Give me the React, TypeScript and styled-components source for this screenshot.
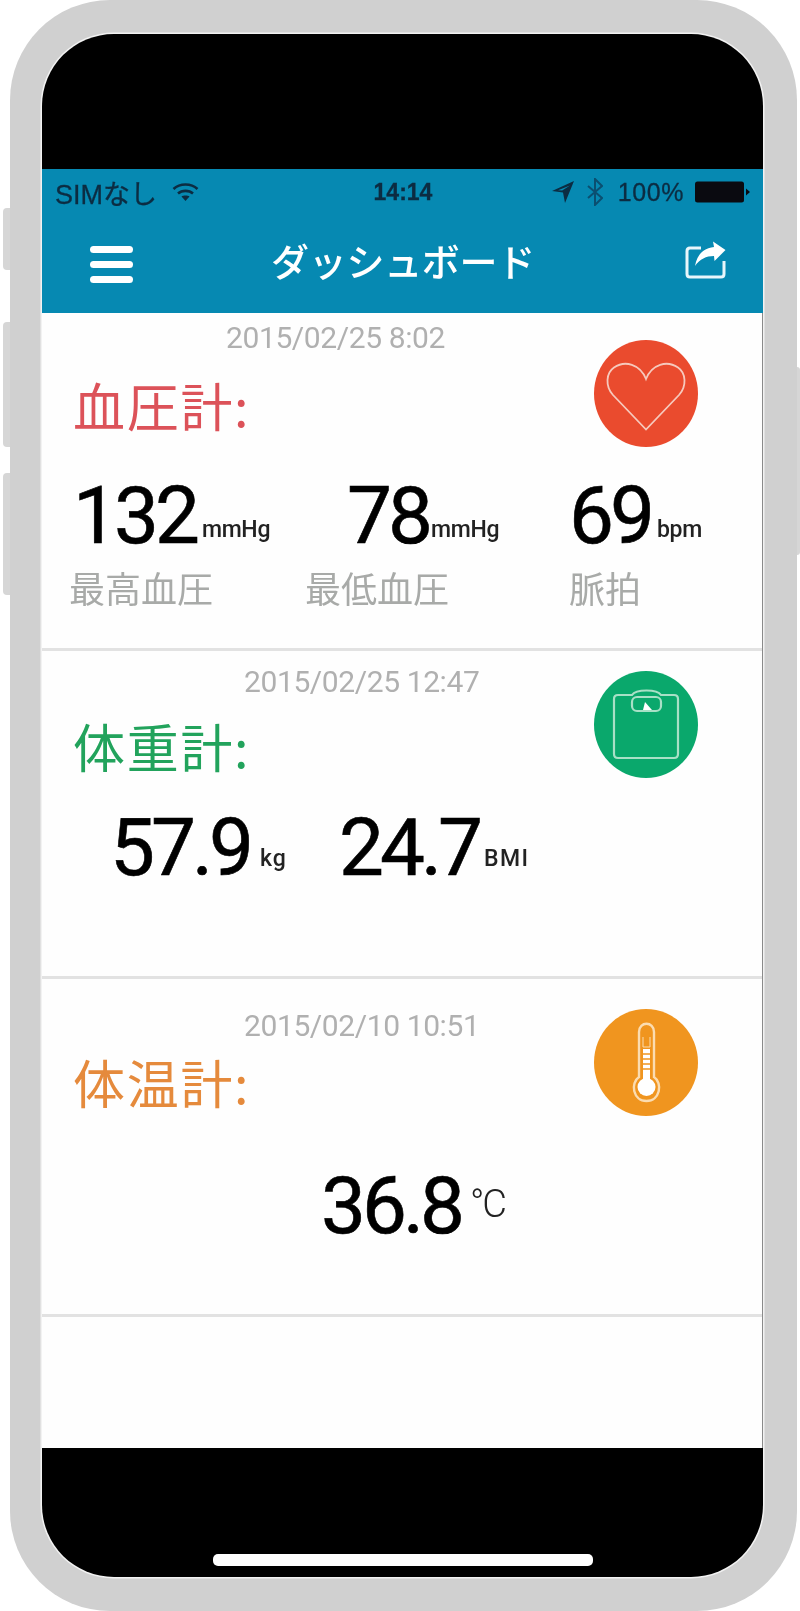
import React from "react";
import styled, { createGlobalStyle } from "styled-components";

const Global = createGlobalStyle`
  html, body { margin: 0; padding: 0; background: #fff; }
  body { width: 800px; height: 1611px; overflow: hidden; font-family: Roboto, "Noto Sans CJK JP", sans-serif; }
`;

const Stage = styled.div`
  width: 800px;
  height: 1611px;
  padding-left: 10px;
  box-sizing: border-box;
  filter: blur(0.6px);
`;
const Phone = styled.div`
  position: relative;
  width: 787px;
  height: 1611px;
  box-sizing: border-box;
  padding: 34px 34px 34px 32px;
  background: #d0d0d0;
  border-radius: 100px;
`;
const SideButton = styled.div<{ $top: number; $height: number; $right?: boolean }>`
  position: absolute;
  top: ${p => p.$top}px;
  height: ${p => p.$height}px;
  width: ${p => (p.$right ? 3 : 7)}px;
  ${p => (p.$right ? "right: -3px;" : "left: -7px;")}
  background: #d6d6d6;
  border-radius: ${p => (p.$right ? "0 3px 3px 0" : "4px 0 0 4px")};
`;
const Screen = styled.div`
  height: 100%;
  display: flex;
  flex-direction: column;
  background: #000;
  border-radius: 72px;
  overflow: hidden;
  box-shadow: 0 0 0 1.5px #f2f2f2;
`;
const TopBlack = styled.div`
  height: 135px;
  flex: none;
`;
const AppBar = styled.header`
  flex: none;
  height: 144px;
  background: #0689b2;
  display: flex;
  flex-direction: column;
`;
const StatusBar = styled.div`
  height: 46px;
  display: grid;
  grid-template-columns: 1fr auto 1fr;
  align-items: center;
  padding: 0 12px 0 13px;
  color: #0c2c42;
  font-family: "Liberation Sans", "Noto Sans CJK JP", sans-serif;
  font-size: 27px;
  -webkit-text-stroke: 0.3px #0c2c42;
`;
const StatusLeft = styled.div`
  display: flex;
  align-items: center;
  gap: 15px;
`;
const StatusTime = styled.div`
  font-weight: 700;
  font-size: 23px;
`;
const StatusRight = styled.div`
  display: flex;
  align-items: center;
  justify-content: flex-end;
  gap: 13px;
`;
const Percent = styled.span`
  font-size: 25px;
  letter-spacing: 0.6px;
  margin: 0 -2px 0 2px;
`;
const NavBar = styled.div`
  flex: 1;
  display: grid;
  grid-template-columns: 1fr auto 1fr;
  align-items: center;
  padding: 0 36px 8px 48px;
  color: #fff;
`;
const NavTitle = styled.div`
  font-family: "Noto Sans CJK JP", sans-serif;
  font-size: 38px;
  font-weight: 500;
  line-height: 44px;
  letter-spacing: -0.3px;
  margin-left: -11px;
`;
const NavRight = styled.div`
  display: flex;
  justify-content: flex-end;
`;
const MenuButton = styled.div`
  display: flex;
  flex-direction: column;
  gap: 8px;
  width: 43px;
  margin-top: 9px;
`;
const MenuBar = styled.div`
  height: 7px;
  background: #fff;
  border-radius: 4px;
`;
const Content = styled.main`
  flex: none;
  height: 1135px;
  background: #fefefe;
  border-right: 1px solid #8a8a8a;
  box-sizing: border-box;
`;
const Card = styled.section<{ $height: number }>`
  height: ${p => p.$height}px;
  box-sizing: border-box;
  padding: 0 64px 0 27px;
  border-bottom: 3px solid #e2e2e2;
`;
const CardHead = styled.div`
  display: grid;
  grid-template-columns: 1fr 104px;
  align-items: start;
`;
const DateText = styled.div<{ $top: number; $left: number }>`
  margin-top: ${p => p.$top}px;
  margin-left: ${p => p.$left}px;
  font-size: 30px;
  line-height: 30px;
  letter-spacing: -0.4px;
  color: #b0b0b0;
`;
const Title = styled.h2<{ $gap: number; $color: string }>`
  margin: ${p => p.$gap}px 0 0 4px;
  font-family: "Noto Sans CJK JP", sans-serif;
  font-size: 52px;
  line-height: 60px;
  font-weight: 400;
  letter-spacing: 1.7px;
  color: ${p => p.$color};
`;
const Badge = styled.div<{ $top: number; $color: string }>`
  margin-top: ${p => p.$top}px;
  width: 104px;
  height: 107px;
  border-radius: 50%;
  background: ${p => p.$color};
  display: flex;
  align-items: center;
  justify-content: center;
`;
const ValueRow = styled.div<{ $top: number; $left: number }>`
  display: flex;
  margin-top: ${p => p.$top}px;
  padding-left: ${p => p.$left}px;
`;
const Column = styled.div<{ $width?: number }>`
  ${p => (p.$width ? `width: ${p.$width}px;` : "")}
  flex: none;
`;
const Value = styled.div<{ $indent?: number }>`
  margin-left: ${p => p.$indent ?? 0}px;
  font-size: 80px;
  line-height: 80px;
  letter-spacing: -4px;
  -webkit-text-stroke: 0.6px #000;
  color: #000;
  white-space: nowrap;
`;
const Unit = styled.span<{ $lift?: number; $gap?: number; $thin?: boolean; $wide?: number }>`
  display: inline-block;
  margin-left: ${p => p.$gap ?? 10}px;
  font-size: ${p => (p.$thin ? 38 : 23)}px;
  font-weight: ${p => (p.$thin ? 300 : 500)};
  line-height: 0;
  letter-spacing: ${p => (p.$thin ? "-2px" : `${p.$wide ?? -0.3}px`)};
  vertical-align: ${p => p.$lift ?? 6}px;
  -webkit-text-stroke: 0;
  color: #222;
`;
const Label = styled.div`
  margin-top: 13px;
  font-family: "Noto Sans CJK JP", sans-serif;
  font-size: 36px;
  line-height: 36px;
  color: #a8aaa8;
`;
const BottomBlack = styled.div`
  flex: 1;
  display: flex;
  align-items: flex-end;
  justify-content: center;
  padding-bottom: 11px;
`;
const HomeBar = styled.div`
  width: 380px;
  height: 12px;
  border-radius: 5px;
  background: #fff;
`;

const Wifi = () => (
  <svg width="27" height="20" viewBox="0 0 27 20" fill="none" stroke="#0c2c42" strokeWidth="2.6">
    <path d="M1.5 7 C8 1 19 1 25.5 7" />
    <path d="M6 11.5 C10 8 17 8 21 11.5" />
    <path d="M13.5 19 L9.5 14.6 C11.5 13.2 15.5 13.2 17.5 14.6 Z" fill="#0c2c42" stroke="none" />
  </svg>
);
const Arrow = () => (
  <svg width="22" height="22" viewBox="0 0 22 22" fill="#0c2c42">
    <path d="M22 0 L0 10 L11 11.5 L13 22 Z M18 4.5 L10.2 9.6 L6 9.3 Z" fillRule="evenodd" />
  </svg>
);
const Bluetooth = () => (
  <svg width="16" height="28" viewBox="0 0 16 28" fill="none" stroke="#0b4f70" strokeWidth="2">
    <path d="M1 8 L15 20 L8 27 L8 1 L15 8 L1 20" />
  </svg>
);
const Battery = () => (
  <svg width="56" height="22" viewBox="0 0 56 22" fill="#0a0a10">
    <rect x="0" y="0.5" width="49" height="21" rx="2.5" />
    <path d="M51 7.5 L55 11 L51 14.5 Z" />
  </svg>
);
const ShareIcon = () => (
  <svg width="42" height="38" viewBox="0 0 42 38" fill="none">
    <path d="M16 7 H5 Q2 7 2 10 V33 Q2 36 5 36 H36 Q39 36 39 33 V20" stroke="#e8f6fb" strokeWidth="3" />
    <path d="M40.5 9 L28 0.5 L29 6 C18 7 12 14 10 25 C15 18 21 15 29 15 L29.5 20 Z" fill="#fff" />
  </svg>
);
const HeartIcon = () => (
  <svg width="104" height="107" viewBox="0 0 104 107" fill="none" stroke="#f6c9bd" strokeWidth="1.8">
    <path d="M52 89.5 L19 55 C11 46 12 33 20 27.5 C31 20 46 24 52 39 C58 24 73 20 84 27.5 C92 33 93 46 85 55 Z" />
  </svg>
);
const ScaleIcon = () => (
  <svg width="104" height="108" viewBox="0 0 104 108" fill="none" stroke="#a8e0c6" strokeWidth="2.2">
    <path d="M24 24 H38 C42 18 63 18 67 24 H80 Q84 24 84 28 V83 Q84 87 80 87 H24 Q20 87 20 83 V28 Q20 24 24 24 Z" />
    <rect x="38" y="26" width="29" height="14" rx="5" />
    <path d="M51 31 L58 39 L49 39 Z" fill="#fff" stroke="none" />
  </svg>
);
const ThermoIcon = () => (
  <svg width="104" height="108" viewBox="0 0 104 108" fill="none">
    <path d="M45 23 C45 12 60 12 60 23 L60 68 C69 74 66 92 52.5 92 C39 92 36 74 45 68 Z" stroke="#fbdcb0" strokeWidth="2.4" />
    <circle cx="52.5" cy="78" r="9" fill="#fff" />
    <path d="M49 40 V72 H56 V40 Z" fill="#fff" />
    <path d="M48 30 H57 M48 35 H57 M48 45 H57 M48 50 H57 M48 55 H57 M48 60 H57" stroke="#f0951f" strokeWidth="1.6" />
    <path d="M49 28 V38 H56 V28" stroke="#fbdcb0" strokeWidth="1" />
  </svg>
);

export default function App() {
  return (
    <Stage>
      <Global />
      <Phone>
        <SideButton $top={208} $height={62} />
        <SideButton $top={322} $height={125} />
        <SideButton $top={473} $height={122} />
        <SideButton $right $top={367} $height={188} />
        <Screen>
          <TopBlack />
          <AppBar>
            <StatusBar>
              <StatusLeft>
                <span>SIMなし</span>
                <Wifi />
              </StatusLeft>
              <StatusTime>14:14</StatusTime>
              <StatusRight>
                <Arrow />
                <Bluetooth />
                <Percent>100%</Percent>
                <Battery />
              </StatusRight>
            </StatusBar>
            <NavBar>
              <MenuButton>
                <MenuBar />
                <MenuBar />
                <MenuBar />
              </MenuButton>
              <NavTitle>ダッシュボード</NavTitle>
              <NavRight>
                <ShareIcon />
              </NavRight>
            </NavBar>
          </AppBar>
          <Content>
            <Card $height={338}>
              <CardHead>
                <div>
                  <DateText $top={10} $left={157}>2015/02/25 8:02</DateText>
                  <Title $gap={22} $color="#dc5259">血圧計:</Title>
                </div>
                <Badge $top={27} $color="#ea4b2e"><HeartIcon /></Badge>
              </CardHead>
              <ValueRow $top={29} $left={0}>
                <Column $width={236}>
                  <Value $indent={4}>132<Unit $gap={6}>mmHg</Unit></Value>
                  <Label>最高血圧</Label>
                </Column>
                <Column $width={264}>
                  <Value $indent={42}>78<Unit $gap={2}>mmHg</Unit></Value>
                  <Label>最低血圧</Label>
                </Column>
                <Column>
                  <Value>69<Unit $gap={6}>bpm</Unit></Value>
                  <Label>脈拍</Label>
                </Column>
              </ValueRow>
            </Card>
            <Card $height={328}>
              <CardHead>
                <div>
                  <DateText $top={16} $left={175}>2015/02/25 12:47</DateText>
                  <Title $gap={19} $color="#22a35c">体重計:</Title>
                </div>
                <Badge $top={20} $color="#0aa86c"><ScaleIcon /></Badge>
              </CardHead>
              <ValueRow $top={30} $left={41}>
                <Column $width={229}>
                  <Value>57.9<Unit $gap={10} $lift={9} $wide={1}>kg</Unit></Value>
                </Column>
                <Column>
                  <Value>24.7<Unit $gap={5} $lift={9} $wide={1.5}>BMI</Unit></Value>
                </Column>
              </ValueRow>
            </Card>
            <Card $height={338}>
              <CardHead>
                <div>
                  <DateText $top={32} $left={175}>2015/02/10 10:51</DateText>
                  <Title $gap={11} $color="#e58a3c">体温計:</Title>
                </div>
                <Badge $top={30} $color="#f0951f"><ThermoIcon /></Badge>
              </CardHead>
              <ValueRow $top={50} $left={252}>
                <Column>
                  <Value>36.8<Unit $gap={9} $lift={16} $thin>°C</Unit></Value>
                </Column>
              </ValueRow>
            </Card>
          </Content>
          <BottomBlack>
            <HomeBar />
          </BottomBlack>
        </Screen>
      </Phone>
    </Stage>
  );
}
